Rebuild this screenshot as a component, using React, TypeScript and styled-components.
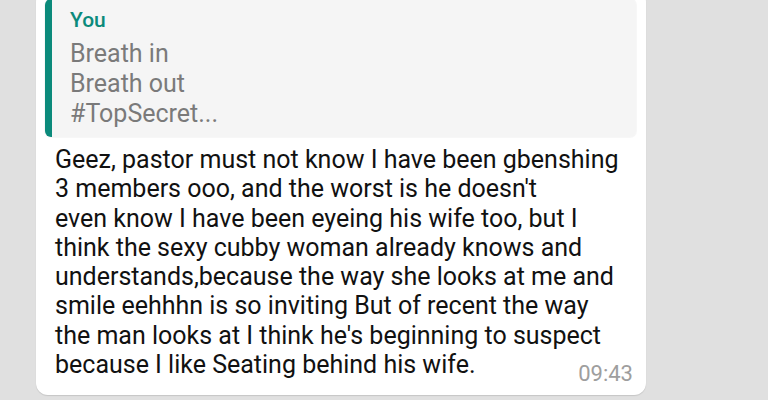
import React from 'react';
import styled, { createGlobalStyle } from 'styled-components';

const GlobalStyle = createGlobalStyle`
  html, body {
    margin: 0;
    padding: 0;
    background: #e0e0e0;
    overflow: hidden;
  }
  body {
    font-family: Roboto, "Noto Sans", "Liberation Sans", sans-serif;
  }
`;

const Screen = styled.div`
  width: 768px;
  height: 400px;
  overflow: hidden;
  background: #e0e0e0;
`;

const Bubble = styled.div`
  position: relative;
  box-sizing: border-box;
  width: 610px;
  margin: -10px 0 0 36px;
  padding: 9px 10px 16px 9px;
  background: #ffffff;
  border-radius: 12px;
  box-shadow: 0 1px 1px rgba(0, 0, 0, 0.12);
`;

const Quote = styled.div`
  display: flex;
  flex-direction: column;
  padding: 8px 12px 8px 18px;
  background: #f5f5f5;
  border-left: 7px solid #0b8a7b;
  border-radius: 6px;
  box-shadow: 0 0 0 1px rgba(0, 0, 0, 0.03);
`;

const Author = styled.div`
  color: #0b8a7b;
  font-size: 21px;
  font-weight: 500;
  line-height: 26px;
  margin-bottom: 6px;
`;

const QuoteLine = styled.div`
  color: #7a7a7a;
  font-size: 25px;
  line-height: 30px;
`;

const Body = styled.div`
  padding: 8px 0 0 10px;
  color: #111111;
  font-size: 25px;
  line-height: 29.3px;
`;

const Line = styled.div`
  white-space: nowrap;
`;

const Time = styled.span`
  position: absolute;
  right: 13px;
  bottom: 10px;
  color: #9e9e9e;
  font-size: 22px;
  line-height: 22px;
`;

const quoted = ['Breath in', 'Breath out', '#TopSecret...'];

const lines = [
  'Geez, pastor must not know I have been gbenshing',
  "3 members ooo, and the worst is he doesn't",
  'even know I have been eyeing his wife too, but I',
  'think the sexy cubby woman already knows and',
  'understands,because the way she looks at me and',
  'smile eehhhn is so inviting But of recent the way',
  "the man looks at I think he's beginning to suspect",
  'because I like Seating behind his wife.',
];

export default function App() {
  return (
    <Screen>
      <GlobalStyle />
      <Bubble>
        <Quote>
          <Author>You</Author>
          {quoted.map((q) => (
            <QuoteLine key={q}>{q}</QuoteLine>
          ))}
        </Quote>
        <Body>
          {lines.map((l, i) => (
            <Line key={i}>{l}</Line>
          ))}
        </Body>
        <Time>09:43</Time>
      </Bubble>
    </Screen>
  );
}
